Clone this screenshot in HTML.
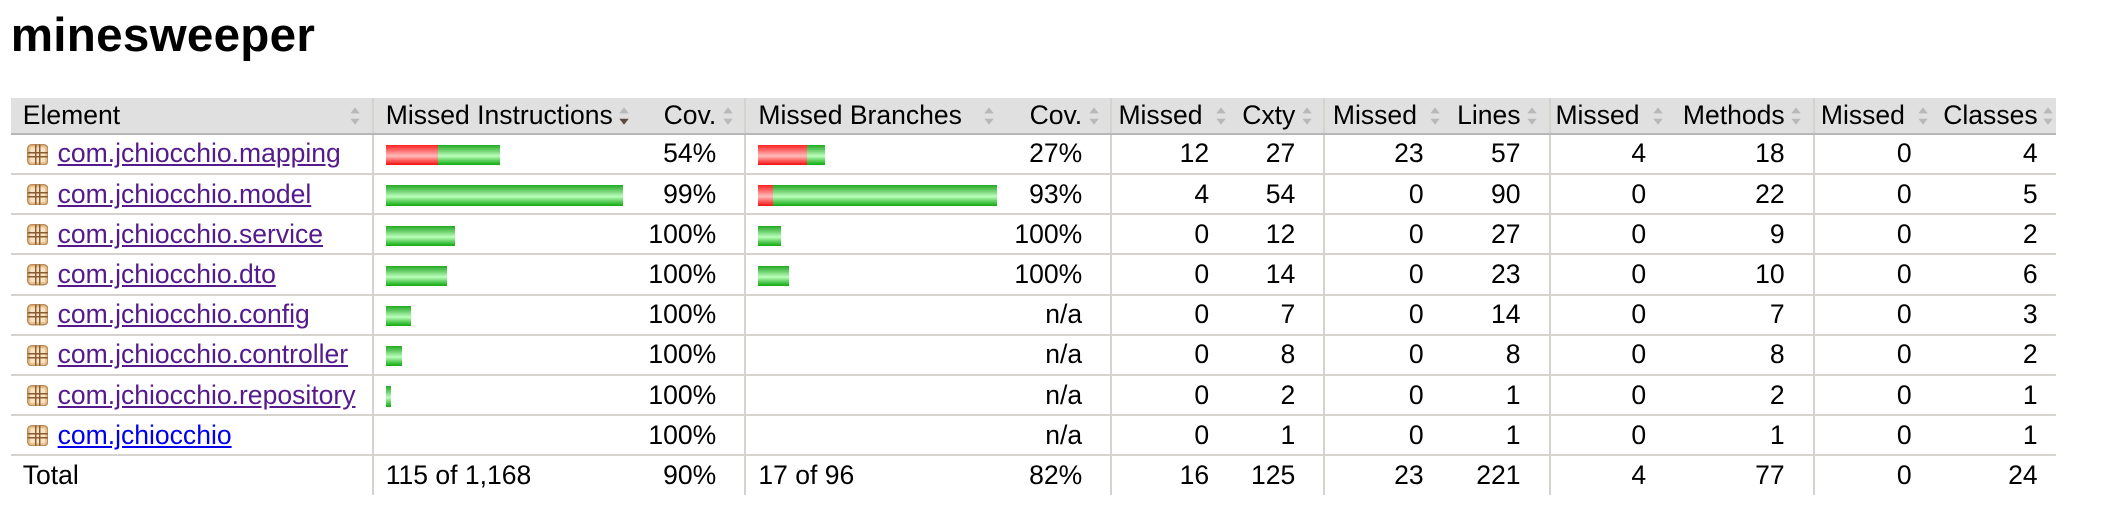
<!DOCTYPE html>
<html><head><meta charset="utf-8">
<style>
html,body{margin:0;padding:0;background:#fff;}
body{width:2102px;height:524px;overflow:hidden;}
#w{zoom:1.3406;font-family:"Liberation Sans",Arial,sans-serif;color:#000;position:relative;width:1568px;height:391px;}
h1{position:absolute;left:8px;top:7px;margin:0;font-size:35.5px;font-weight:bold;line-height:1.15;letter-spacing:0.2px;}
table{position:absolute;left:8px;top:73px;border-collapse:collapse;table-layout:fixed;font-size:19.8px;}
td{height:28.5px;padding:0;white-space:nowrap;border-bottom:1.5px solid #d6d3ce;vertical-align:middle;overflow:hidden;}
thead td{background:#e0e0e0;height:26px;border-bottom:2px solid #b8b8b8;position:relative;}
tfoot td{border-bottom:none;}
.g{border-left:1.5px solid #d6d3ce;}
.r{text-align:right;padding-right:21px;}
.r1{text-align:right;padding-right:16px;}
thead .r,thead .r1{padding-right:21px;}
.l{padding-left:9px;}
.ar{position:absolute;top:6px;width:9px;height:15px;}
.ic{display:inline-block;vertical-align:-2px;margin-left:12px;margin-right:7px;}
a{color:#551a8b;text-decoration:underline;}
a.b{color:#0000ee;}
.bar{display:inline-block;height:15px;vertical-align:middle;}
.red{background:linear-gradient(#f22 0%,#f66 25%,#fbb 55%,#f55 80%,#e11 100%);}
.grn{background:linear-gradient(#2a2 0%,#6c6 25%,#bfb 55%,#5c5 80%,#1a1 100%);}
</style></head><body><div id="w">
<h1>minesweeper</h1>
<svg width="0" height="0" style="position:absolute"><defs>
<g id="s"><path d="M4.5 1 L8 5.5 H1 Z" fill="#b8b8b8"/><path d="M4.5 14 L8 9.5 H1 Z" fill="#b8b8b8"/></g>
<g id="d"><path d="M4.5 1 L8 5.5 H1 Z" fill="#b8b8b8"/><path d="M4.5 14 L8 9.5 H1 Z" fill="#5a4a42"/></g>
<g id="p"><rect x="0.5" y="0.5" width="15" height="15" rx="3" fill="#e6c08e" stroke="#b98a5a"/><rect x="2.5" y="2.5" width="11" height="11" rx="1" fill="#f8e4c4"/><path d="M6.5 0.5V15.5M9.5 0.5V15.5M0.5 6.5H15.5M0.5 9.5H15.5" stroke="#8a5a30" stroke-width="1.1"/></g>
</defs></svg>
<table>
<colgroup><col style="width:270px"><col style="width:202px"><col style="width:76px"><col style="width:194px"><col style="width:79px"><col style="width:89px"><col style="width:70px"><col style="width:90px"><col style="width:78px"><col style="width:88px"><col style="width:109px"><col style="width:89px"><col style="width:92px"></colgroup>
<thead><tr>
<td class="l">Element<svg class="ar" style="right:8px"><use href="#s"/></svg></td>
<td class="g l">Missed Instructions<svg class="ar" style="right:10px"><use href="#d"/></svg></td>
<td class="r" style="padding-right:21px">Cov.<svg class="ar" style="right:8px"><use href="#s"/></svg></td>
<td class="g l">Missed Branches<svg class="ar" style="right:8px"><use href="#s"/></svg></td>
<td class="r">Cov.<svg class="ar" style="right:8px"><use href="#s"/></svg></td>
<td class="g r1">Missed<svg class="ar" style="right:3px"><use href="#s"/></svg></td>
<td class="r">Cxty<svg class="ar" style="right:8px"><use href="#s"/></svg></td>
<td class="g r1">Missed<svg class="ar" style="right:3px"><use href="#s"/></svg></td>
<td class="r">Lines<svg class="ar" style="right:8px"><use href="#s"/></svg></td>
<td class="g r1">Missed<svg class="ar" style="right:3px"><use href="#s"/></svg></td>
<td class="r">Methods<svg class="ar" style="right:8px"><use href="#s"/></svg></td>
<td class="g r1">Missed<svg class="ar" style="right:3px"><use href="#s"/></svg></td>
<td class="r" style="padding-right:14px">Classes<svg class="ar" style="right:2px"><use href="#s"/></svg></td>
</tr></thead>
<tbody>
<tr><td><svg class="ic" width="16" height="16"><use href="#p"/></svg><a>com.jchiocchio.mapping</a></td><td class="g l"><span class="bar red" style="width:39px"></span><span class="bar grn" style="width:46px"></span></td><td class="r">54%</td><td class="g l"><span class="bar red" style="width:36px"></span><span class="bar grn" style="width:14px"></span></td><td class="r">27%</td><td class="g r1">12</td><td class="r">27</td><td class="g r1">23</td><td class="r">57</td><td class="g r1">4</td><td class="r">18</td><td class="g r1">0</td><td class="r" style="padding-right:14px">4</td></tr>
<tr><td><svg class="ic" width="16" height="16"><use href="#p"/></svg><a>com.jchiocchio.model</a></td><td class="g l"><span class="bar grn" style="width:177px"></span></td><td class="r">99%</td><td class="g l"><span class="bar red" style="width:11px"></span><span class="bar grn" style="width:167px"></span></td><td class="r">93%</td><td class="g r1">4</td><td class="r">54</td><td class="g r1">0</td><td class="r">90</td><td class="g r1">0</td><td class="r">22</td><td class="g r1">0</td><td class="r" style="padding-right:14px">5</td></tr>
<tr><td><svg class="ic" width="16" height="16"><use href="#p"/></svg><a>com.jchiocchio.service</a></td><td class="g l"><span class="bar grn" style="width:52px"></span></td><td class="r">100%</td><td class="g l"><span class="bar grn" style="width:17px"></span></td><td class="r">100%</td><td class="g r1">0</td><td class="r">12</td><td class="g r1">0</td><td class="r">27</td><td class="g r1">0</td><td class="r">9</td><td class="g r1">0</td><td class="r" style="padding-right:14px">2</td></tr>
<tr><td><svg class="ic" width="16" height="16"><use href="#p"/></svg><a>com.jchiocchio.dto</a></td><td class="g l"><span class="bar grn" style="width:46px"></span></td><td class="r">100%</td><td class="g l"><span class="bar grn" style="width:23px"></span></td><td class="r">100%</td><td class="g r1">0</td><td class="r">14</td><td class="g r1">0</td><td class="r">23</td><td class="g r1">0</td><td class="r">10</td><td class="g r1">0</td><td class="r" style="padding-right:14px">6</td></tr>
<tr><td><svg class="ic" width="16" height="16"><use href="#p"/></svg><a>com.jchiocchio.config</a></td><td class="g l"><span class="bar grn" style="width:19px"></span></td><td class="r">100%</td><td class="g l"></td><td class="r">n/a</td><td class="g r1">0</td><td class="r">7</td><td class="g r1">0</td><td class="r">14</td><td class="g r1">0</td><td class="r">7</td><td class="g r1">0</td><td class="r" style="padding-right:14px">3</td></tr>
<tr><td><svg class="ic" width="16" height="16"><use href="#p"/></svg><a>com.jchiocchio.controller</a></td><td class="g l"><span class="bar grn" style="width:12px"></span></td><td class="r">100%</td><td class="g l"></td><td class="r">n/a</td><td class="g r1">0</td><td class="r">8</td><td class="g r1">0</td><td class="r">8</td><td class="g r1">0</td><td class="r">8</td><td class="g r1">0</td><td class="r" style="padding-right:14px">2</td></tr>
<tr><td><svg class="ic" width="16" height="16"><use href="#p"/></svg><a>com.jchiocchio.repository</a></td><td class="g l"><span class="bar grn" style="width:4px"></span></td><td class="r">100%</td><td class="g l"></td><td class="r">n/a</td><td class="g r1">0</td><td class="r">2</td><td class="g r1">0</td><td class="r">1</td><td class="g r1">0</td><td class="r">2</td><td class="g r1">0</td><td class="r" style="padding-right:14px">1</td></tr>
<tr><td><svg class="ic" width="16" height="16"><use href="#p"/></svg><a class="b">com.jchiocchio</a></td><td class="g l"></td><td class="r">100%</td><td class="g l"></td><td class="r">n/a</td><td class="g r1">0</td><td class="r">1</td><td class="g r1">0</td><td class="r">1</td><td class="g r1">0</td><td class="r">1</td><td class="g r1">0</td><td class="r" style="padding-right:14px">1</td></tr>
</tbody>
<tfoot><tr><td class="l">Total</td><td class="g l">115 of 1,168</td><td class="r">90%</td><td class="g l">17 of 96</td><td class="r">82%</td><td class="g r1">16</td><td class="r">125</td><td class="g r1">23</td><td class="r">221</td><td class="g r1">4</td><td class="r">77</td><td class="g r1">0</td><td class="r" style="padding-right:14px">24</td></tr></tfoot>
</table>
</div></body></html>
